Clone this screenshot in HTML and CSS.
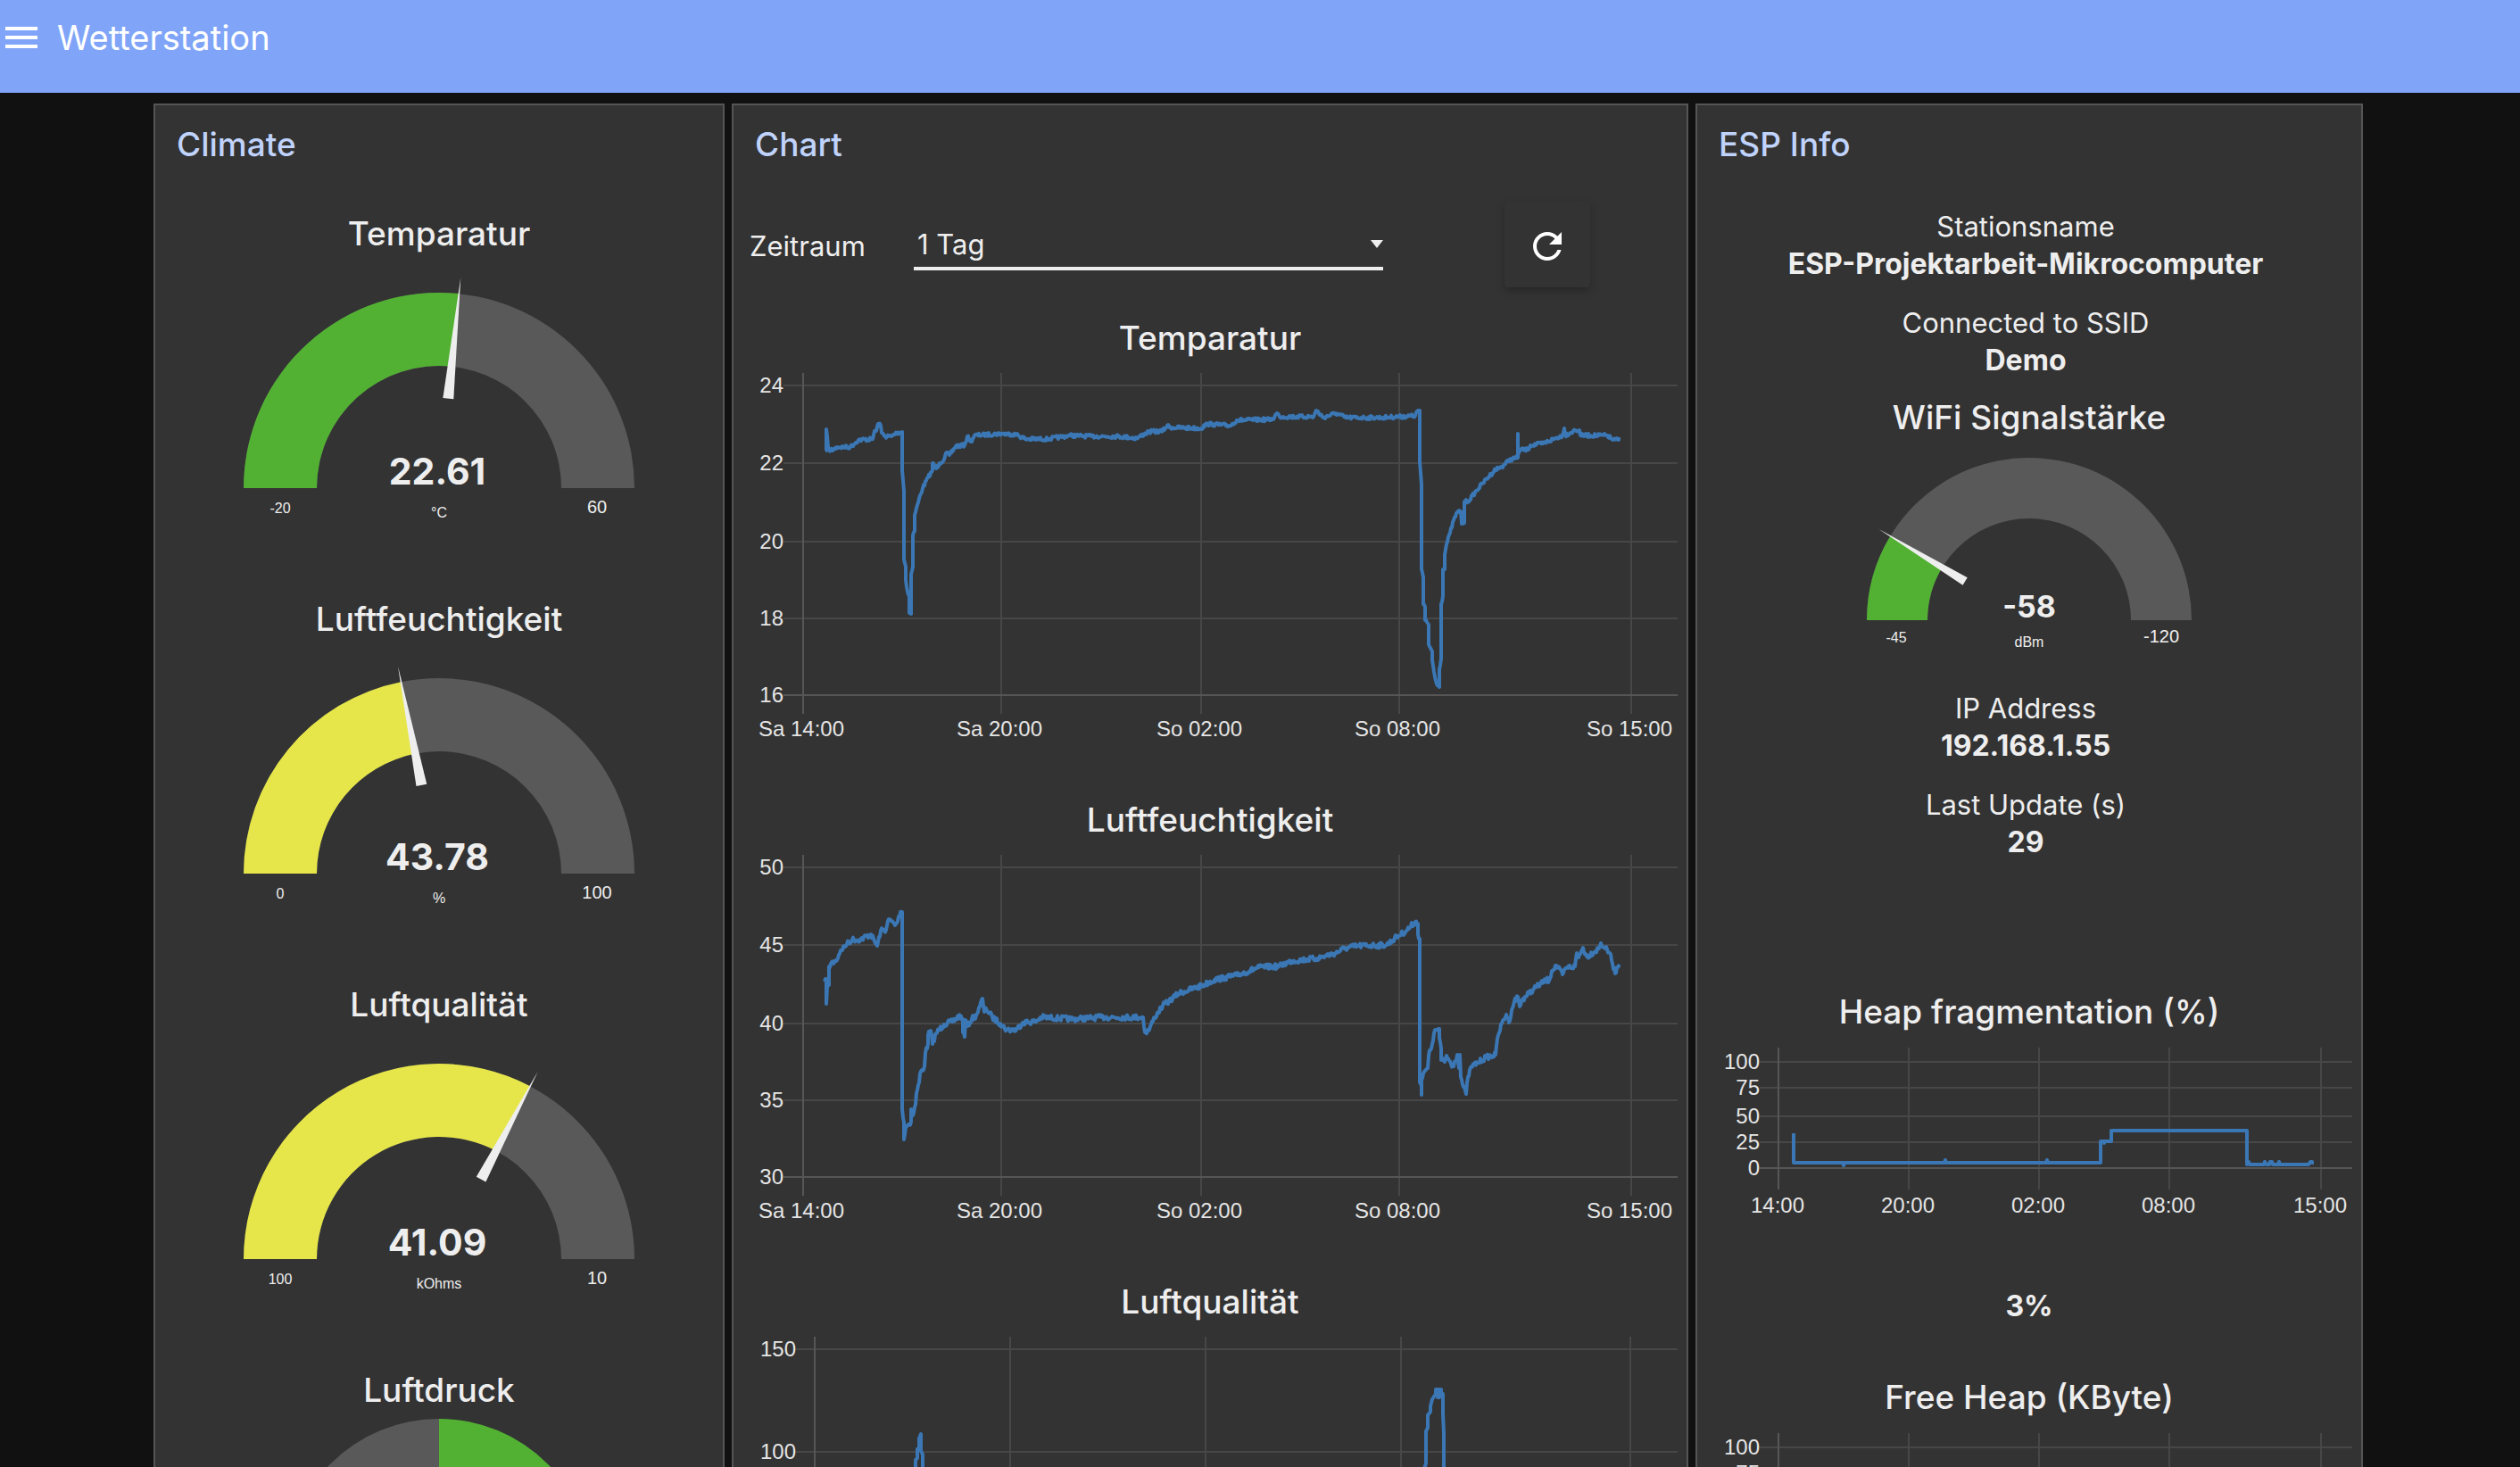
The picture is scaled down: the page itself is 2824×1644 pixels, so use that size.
FILE: index.html
```html
<!DOCTYPE html>
<html lang="de">
<head>
<meta charset="utf-8">
<meta name="viewport" content="width=device-width, initial-scale=1">
<title>Wetterstation</title>
<link rel="stylesheet" href="styles.css">
</head>
<body>
<header class="toolbar">
  <button class="menu-button" type="button" aria-label="Menu">
    <svg viewBox="0 0 36 24"><path d="M0 0h36v4H0zM0 10h36v4H0zM0 20h36v4H0z"/></svg>
  </button>
  <h1 class="toolbar-title">Wetterstation</h1>
</header>

<main class="dashboard">
  <section class="card">
    <h2 class="card-title">Climate</h2>

    <div class="gauge">
      <h3 class="widget-title">Temparatur</h3>
      <svg viewBox="0 0 636 378">
        <g transform="translate(318 258)">
          <path class="ring" d="M-219 0A219 219 0 0 1 219 0H137A137 137 0 0 0 -137 0Z"/>
          <path class="green" d="M-219 0A219 219 0 0 1 22.4 -217.9L14 -136.3A137 137 0 0 0 -137 0Z"/>
          <path class="needle" d="M-6 -101H6L0 -237Z" transform="rotate(5.87)"/>
          <text class="value" x="-2" y="-4">22.61</text>
          <text class="min" x="-178" y="28">-20</text>
          <text class="min" y="33">°C</text>
          <text class="max" x="177" y="28">60</text>
        </g>
      </svg>
    </div>

    <div class="gauge">
      <h3 class="widget-title">Luftfeuchtigkeit</h3>
      <svg viewBox="0 0 636 378">
        <g transform="translate(318 258)">
          <path class="ring" d="M-219 0A219 219 0 0 1 219 0H137A137 137 0 0 0 -137 0Z"/>
          <path class="yellow" d="M-219 0A219 219 0 0 1 -42.5 -214.8L-26.6 -134.4A137 137 0 0 0 -137 0Z"/>
          <path class="needle" d="M-6 -101H6L0 -237Z" transform="rotate(-11.2)"/>
          <text class="value" x="-2" y="-4">43.78</text>
          <text class="min" x="-178" y="28">0</text>
          <text class="min" y="33">%</text>
          <text class="max" x="177" y="28">100</text>
        </g>
      </svg>
    </div>

    <div class="gauge">
      <h3 class="widget-title">Luftqualität</h3>
      <svg viewBox="0 0 636 378">
        <g transform="translate(318 258)">
          <path class="ring" d="M-219 0A219 219 0 0 1 219 0H137A137 137 0 0 0 -137 0Z"/>
          <path class="yellow" d="M-219 0A219 219 0 0 1 102.1 -193.7L63.9 -121.2A137 137 0 0 0 -137 0Z"/>
          <path class="needle" d="M-6 -101H6L0 -237Z" transform="rotate(27.8)"/>
          <text class="value" x="-2" y="-4">41.09</text>
          <text class="min" x="-178" y="28">100</text>
          <text class="min" y="33">kOhms</text>
          <text class="max" x="177" y="28">10</text>
        </g>
      </svg>
    </div>

    <div class="gauge">
      <h3 class="widget-title">Luftdruck</h3>
      <svg viewBox="0 0 636 378">
        <g transform="translate(318 177)">
          <path class="ring" d="M0 -172A172 172 0 0 0 0 172V107A107 107 0 0 1 0 -107Z"/>
          <path class="green" d="M0 -172A172 172 0 0 1 0 172V107A107 107 0 0 0 0 -107Z"/>
        </g>
      </svg>
    </div>
  </section>

  <section class="card">
    <h2 class="card-title">Chart</h2>

    <div class="controls">
      <label class="controls-label" for="range">Zeitraum</label>
      <div class="select">
        <select id="range"><option>1 Tag</option></select>
        <svg class="caret" viewBox="0 0 14 9"><path d="M0 0h14L7 9z"/></svg>
      </div>
      <button class="refresh" type="button" aria-label="Aktualisieren">
        <svg viewBox="0 0 24 24"><path d="M17.65 6.35C16.2 4.9 14.21 4 12 4c-4.42 0-7.99 3.58-7.99 8s3.57 8 7.99 8c3.73 0 6.84-2.55 7.73-6h-2.08c-.82 2.33-3.04 4-5.65 4-3.31 0-6-2.69-6-6s2.69-6 6-6c1.66 0 3.14.69 4.22 1.78L13 11h7V4l-2.35 2.35z"/></svg>
      </button>
    </div>

    <div class="chart">
      <h3 class="widget-title">Temparatur</h3>
      <svg viewBox="0 0 1068 486">
        <path class="grid" d="M56 26H1058M56 113H1058M56 201H1058M56 287H1058M300 12V394M524 12V394M746 12V394M1006 12V394"/>
        <path class="grid axis" d="M56 373H1058M78 12V394"/>
        <g class="y-labels">
          <text x="56" y="34">24</text><text x="56" y="121">22</text><text x="56" y="209">20</text>
          <text x="56" y="295">18</text><text x="56" y="381">16</text>
        </g>
        <g class="x-labels">
          <text x="76" y="419">Sa 14:00</text><text x="298" y="419">Sa 20:00</text><text x="522" y="419">So 02:00</text>
          <text x="744" y="419">So 08:00</text><text x="1004" y="419">So 15:00</text>
        </g>
        <path class="series" data-series="temperature"/>
      </svg>
    </div>

    <div class="chart">
      <h3 class="widget-title">Luftfeuchtigkeit</h3>
      <svg viewBox="0 0 1068 486">
        <path class="grid" d="M56 26H1058M56 113H1058M56 201H1058M56 287H1058M300 12V394M524 12V394M746 12V394M1006 12V394"/>
        <path class="grid axis" d="M56 373H1058M78 12V394"/>
        <g class="y-labels">
          <text x="56" y="34">50</text><text x="56" y="121">45</text><text x="56" y="209">40</text>
          <text x="56" y="295">35</text><text x="56" y="381">30</text>
        </g>
        <g class="x-labels">
          <text x="76" y="419">Sa 14:00</text><text x="298" y="419">Sa 20:00</text><text x="522" y="419">So 02:00</text>
          <text x="744" y="419">So 08:00</text><text x="1004" y="419">So 15:00</text>
        </g>
        <path class="series" data-series="humidity"/>
      </svg>
    </div>

    <div class="chart">
      <h3 class="widget-title">Luftqualität</h3>
      <svg viewBox="0 0 1068 486">
        <path class="grid" d="M70 26H1058M70 141H1058M310 12V394M529 12V394M748 12V394M1005 12V394"/>
        <path class="grid axis" d="M91 12V394"/>
        <g class="y-labels">
          <text x="70" y="34">150</text><text x="70" y="149">100</text>
        </g>
        <path class="series" d="M202 300L204 158V150L206 148V138L208 136V126L210 121V140L212 144V300M772 300L774 160L776 154V118L778 114V100L781 96V90L783 82L787 76V71H789V80L791 71V80L793 71V78L795 76V98L796 120V300"/>
      </svg>
    </div>
  </section>

  <section class="card">
    <h2 class="card-title">ESP Info</h2>

    <dl class="facts facts-first">
      <div class="fact"><dt>Stationsname</dt><dd>ESP-Projektarbeit-Mikrocomputer</dd></div>
      <div class="fact"><dt>Connected to SSID</dt><dd>Demo</dd></div>
    </dl>

    <div class="gauge gauge-small">
      <h3 class="widget-title">WiFi Signalstärke</h3>
      <svg viewBox="0 0 744 270">
        <g transform="translate(372 200)">
          <path class="ring" d="M-182 0A182 182 0 0 1 182 0H114A114 114 0 0 0 -114 0Z"/>
          <path class="green" d="M-182 0A182 182 0 0 1 -155.7 -94.3L-97.5 -59.1A114 114 0 0 0 -114 0Z"/>
          <path class="needle" d="M-5 -84H5L0 -197Z" transform="rotate(-58.8)"/>
          <text class="value" y="-3">-58</text>
          <text class="min" x="-149" y="25">-45</text>
          <text class="min" y="30">dBm</text>
          <text class="max" x="148" y="25">-120</text>
        </g>
      </svg>
    </div>

    <dl class="facts">
      <div class="fact"><dt>IP Address</dt><dd>192.168.1.55</dd></div>
      <div class="fact"><dt>Last Update (s)</dt><dd>29</dd></div>
    </dl>

    <div class="chart chart-small">
      <h3 class="widget-title">Heap fragmentation (%)</h3>
      <svg viewBox="0 0 744 236">
        <path class="grid" d="M70 29H734M70 58H734M70 90H734M70 119H734M237 13V172M383 13V172M529 13V172M699 13V172"/>
        <path class="grid axis" d="M70 148H734M91 13V172"/>
        <g class="y-labels">
          <text x="70" y="37">100</text><text x="70" y="66">75</text><text x="70" y="98">50</text>
          <text x="70" y="127">25</text><text x="70" y="156">0</text>
        </g>
        <g class="x-labels">
          <text x="90" y="198">14:00</text><text x="236" y="198">20:00</text><text x="382" y="198">02:00</text>
          <text x="528" y="198">08:00</text><text x="698" y="198">15:00</text>
        </g>
        <path class="series" d="M108 109V142H163L164 145L165 142H277L278 139L279 142H391L392 139L393 142H452V118H456V120V118H464V106H616V144L618 141L619 144H635L636 141L638 144H641L642 141H644L645 144H651L652 141L653 144H685L687 141H689V144"/>
      </svg>
    </div>

    <p class="reading">3%</p>

    <div class="chart chart-small">
      <h3 class="widget-title">Free Heap (KByte)</h3>
      <svg viewBox="0 0 744 236">
        <path class="grid" d="M70 29H734M70 58H734M70 90H734M70 119H734M237 13V172M383 13V172M529 13V172M699 13V172"/>
        <path class="grid axis" d="M70 148H734M91 13V172"/>
        <g class="y-labels">
          <text x="70" y="37">100</text><text x="70" y="66">75</text>
        </g>
      </svg>
    </div>
  </section>
</main>
<script src="charts.js"></script>
</body>
</html>
```
FILE: styles.css
```css
* { box-sizing: border-box; }

body {
  margin: 0;
  height: 100vh;
  overflow: hidden;
  background: #111;
  color: #eee;
  font-family: Inter, "Liberation Sans", sans-serif;
  font-size: 31px;
}

h1, h2, h3, p, dl, dd { margin: 0; }
svg { display: block; width: 100%; }

.toolbar {
  display: flex;
  align-items: flex-start;
  gap: 22px;
  height: 104px;
  padding: 16px 6px;
  background: #80a5f8;
  color: #fff;
}
.menu-button {
  display: flex;
  align-items: center;
  width: 36px;
  height: 52px;
  padding: 0;
  border: 0;
  background: none;
  fill: #fff;
}
.toolbar-title {
  font-size: 38px;
  font-weight: 400;
  line-height: 52px;
}

.dashboard {
  display: grid;
  grid-template-columns: 640fr 1072fr 748fr;
  gap: 8px;
  padding: 12px 176px 0 172px;
}
.card {
  min-width: 0;
  border: 2px solid #555;
  background: #333;
}
.card-title {
  padding-left: 24px;
  color: #c0d3fc;
  font-size: 37px;
  font-weight: 500;
  line-height: 88px;
}
.widget-title {
  font-size: 37px;
  font-weight: 500;
  line-height: 54px;
  text-align: center;
}

/* gauges */
.card-title + .gauge { margin-top: 29px; }
.ring { fill: #595959; }
.green { fill: #52b133; }
.yellow { fill: #e6e64a; }
.needle { fill: #eee; }
.gauge text { fill: #eee; text-anchor: middle; }
.gauge .value { font-size: 41px; font-weight: 700; }
.gauge-small .value { font-size: 34px; }
.min, .max { font-family: "Liberation Sans", Arial, sans-serif; }
.min { font-size: 16px; }
.max { font-size: 20px; }

/* chart controls */
.controls {
  display: grid;
  grid-template-columns: 184px 1fr 96px;
  align-items: center;
  margin: 20px 108px 30px 18px;
}
.controls-label { padding-top: 2px; }
.select {
  position: relative;
  margin-right: 136px;
  border-bottom: 4px solid #eee;
}
.select select {
  display: block;
  width: 100%;
  height: 54px;
  padding: 2px 4px 0;
  border: 0;
  background: none;
  color: #eee;
  font: inherit;
  appearance: none;
}
.caret {
  position: absolute;
  top: 24px;
  right: 0;
  width: 14px;
  fill: #eee;
}
.refresh {
  display: grid;
  place-items: center;
  width: 96px;
  height: 96px;
  padding: 4px 0 0;
  border: 0;
  border-radius: 4px;
  background: #333;
  box-shadow: 0 4px 10px rgba(0, 0, 0, 0.26);
  fill: #fff;
}
.refresh svg { width: 48px; }

/* charts */
.grid { fill: none; stroke: #474747; stroke-width: 2; }
.axis { stroke: #565656; }
.chart text {
  fill: #e5e5e5;
  font-family: "Liberation Sans", Arial, sans-serif;
  font-size: 24px;
}
.y-labels { text-anchor: end; }
.x-labels { text-anchor: middle; }
.series {
  fill: none;
  stroke: #3a77b4;
  stroke-width: 4;
  stroke-linejoin: round;
}

/* station facts */
.facts {
  display: grid;
  gap: 24px;
  padding: 8px 8px 0 0;
  text-align: center;
  line-height: 42px;
}
.facts-first { padding-top: 27px; margin-bottom: 16px; }
.facts dd { font-size: 32px; font-weight: 700; }
.facts + .chart { margin-top: 142px; }
.reading {
  margin-bottom: 44px;
  padding-top: 46px;
  font-size: 32px;
  font-weight: 700;
  line-height: 42px;
  text-align: center;
}
.reading + .chart { margin-top: 54px; }
```
FILE: charts.js
```js
// Sensor curves as [x, y] turning points in chart units. Between two distant
// points the readings flicker by up to `jitter` units.
const curves = {
  temperature: {
    jitter: 2,
    points: [[103,99],[104,99],[104,75],[106,95],[107,98],[112,98],[116,95],[131,95],[140,87],[156,86],[158,77],[160,77],[162,69],[165,71],[166,79],[170,83],[177,83],[183,79],[189,78],[189,121],[191,144],[191,221],[193,229],[193,244],[195,257],[197,261],[197,281],[199,282],[199,237],[201,229],[201,194],[203,189],[203,171],[207,157],[209,149],[212,141],[218,129],[223,121],[223,113],[227,119],[231,113],[236,109],[239,101],[242,104],[249,94],[259,93],[262,83],[266,89],[270,82],[300,80],[317,81],[327,86],[352,86],[377,82],[402,83],[431,83],[452,85],[465,78],[481,77],[486,71],[490,73],[524,74],[531,69],[557,71],[564,65],[604,64],[609,57],[612,61],[650,61],[653,54],[661,62],[675,57],[686,62],[725,62],[764,60],[767,54],[769,54],[769,111],[771,137],[771,232],[773,241],[773,271],[775,274],[775,289],[779,294],[779,316],[783,324],[783,334],[785,347],[787,357],[791,364],[791,344],[793,332],[793,271],[795,262],[795,232],[797,232],[797,216],[799,204],[803,191],[807,177],[811,168],[815,167],[816,181],[819,180],[819,156],[823,156],[839,136],[854,120],[861,117],[870,109],[879,107],[879,80],[879,102],[882,98],[890,98],[893,93],[907,91],[929,82],[931,74],[932,82],[941,77],[948,76],[949,82],[979,82],[986,87],[992,87],[992,84]]
  },
  humidity: {
    jitter: 3,
    points: [[102,154],[103,151],[104,151],[104,179],[105,160],[107,158],[107,137],[109,134],[115,131],[120,119],[127,112],[133,107],[142,107],[154,101],[158,109],[161,114],[165,97],[171,96],[173,86],[177,86],[181,91],[184,86],[187,76],[189,76],[189,297],[191,312],[191,331],[193,317],[199,311],[199,297],[201,304],[204,292],[205,279],[208,267],[209,257],[214,249],[215,234],[218,224],[218,214],[221,209],[223,224],[227,212],[236,202],[245,199],[254,192],[257,196],[257,211],[259,216],[260,197],[262,204],[267,196],[272,192],[276,182],[279,173],[281,188],[283,184],[290,194],[299,201],[306,208],[317,208],[324,200],[338,199],[345,194],[381,196],[413,194],[452,194],[459,194],[461,211],[465,209],[472,194],[481,181],[488,176],[499,167],[524,159],[539,152],[564,147],[589,138],[611,137],[625,131],[654,128],[675,122],[684,117],[700,114],[732,113],[743,104],[754,97],[764,87],[767,89],[767,101],[769,106],[769,267],[771,270],[771,281],[771,264],[775,254],[778,251],[779,237],[783,224],[785,212],[788,208],[791,207],[791,217],[793,229],[793,242],[797,244],[799,237],[806,249],[811,236],[813,251],[814,236],[815,261],[818,272],[821,280],[823,261],[827,249],[834,245],[843,239],[854,236],[855,226],[857,214],[861,201],[866,191],[869,200],[872,186],[875,176],[879,171],[881,182],[884,174],[897,162],[911,152],[914,153],[917,142],[922,136],[929,146],[934,138],[943,137],[945,122],[947,127],[952,116],[956,126],[970,117],[972,111],[977,117],[982,122],[985,134],[988,145],[990,138],[993,135]]
  }
};

function buildPath({ points, jitter }) {
  let seed = 7;
  const random = () => (seed = (seed * 16807) % 2147483647) / 2147483647;
  let d = `M${points[0]}`;
  for (let i = 1; i < points.length; i++) {
    const [x0, y0] = points[i - 1];
    const [x1, y1] = points[i];
    const steps = x1 - x0;
    for (let s = 1; s < steps; s++) {
      const x = x0 + s;
      const y = y0 + ((y1 - y0) * s) / steps + (random() * 2 - 1) * jitter;
      d += `L${x} ${y.toFixed(1)}`;
    }
    d += `L${x1} ${y1}`;
  }
  return d;
}

for (const path of document.querySelectorAll("[data-series]")) {
  path.setAttribute("d", buildPath(curves[path.dataset.series]));
}
```
